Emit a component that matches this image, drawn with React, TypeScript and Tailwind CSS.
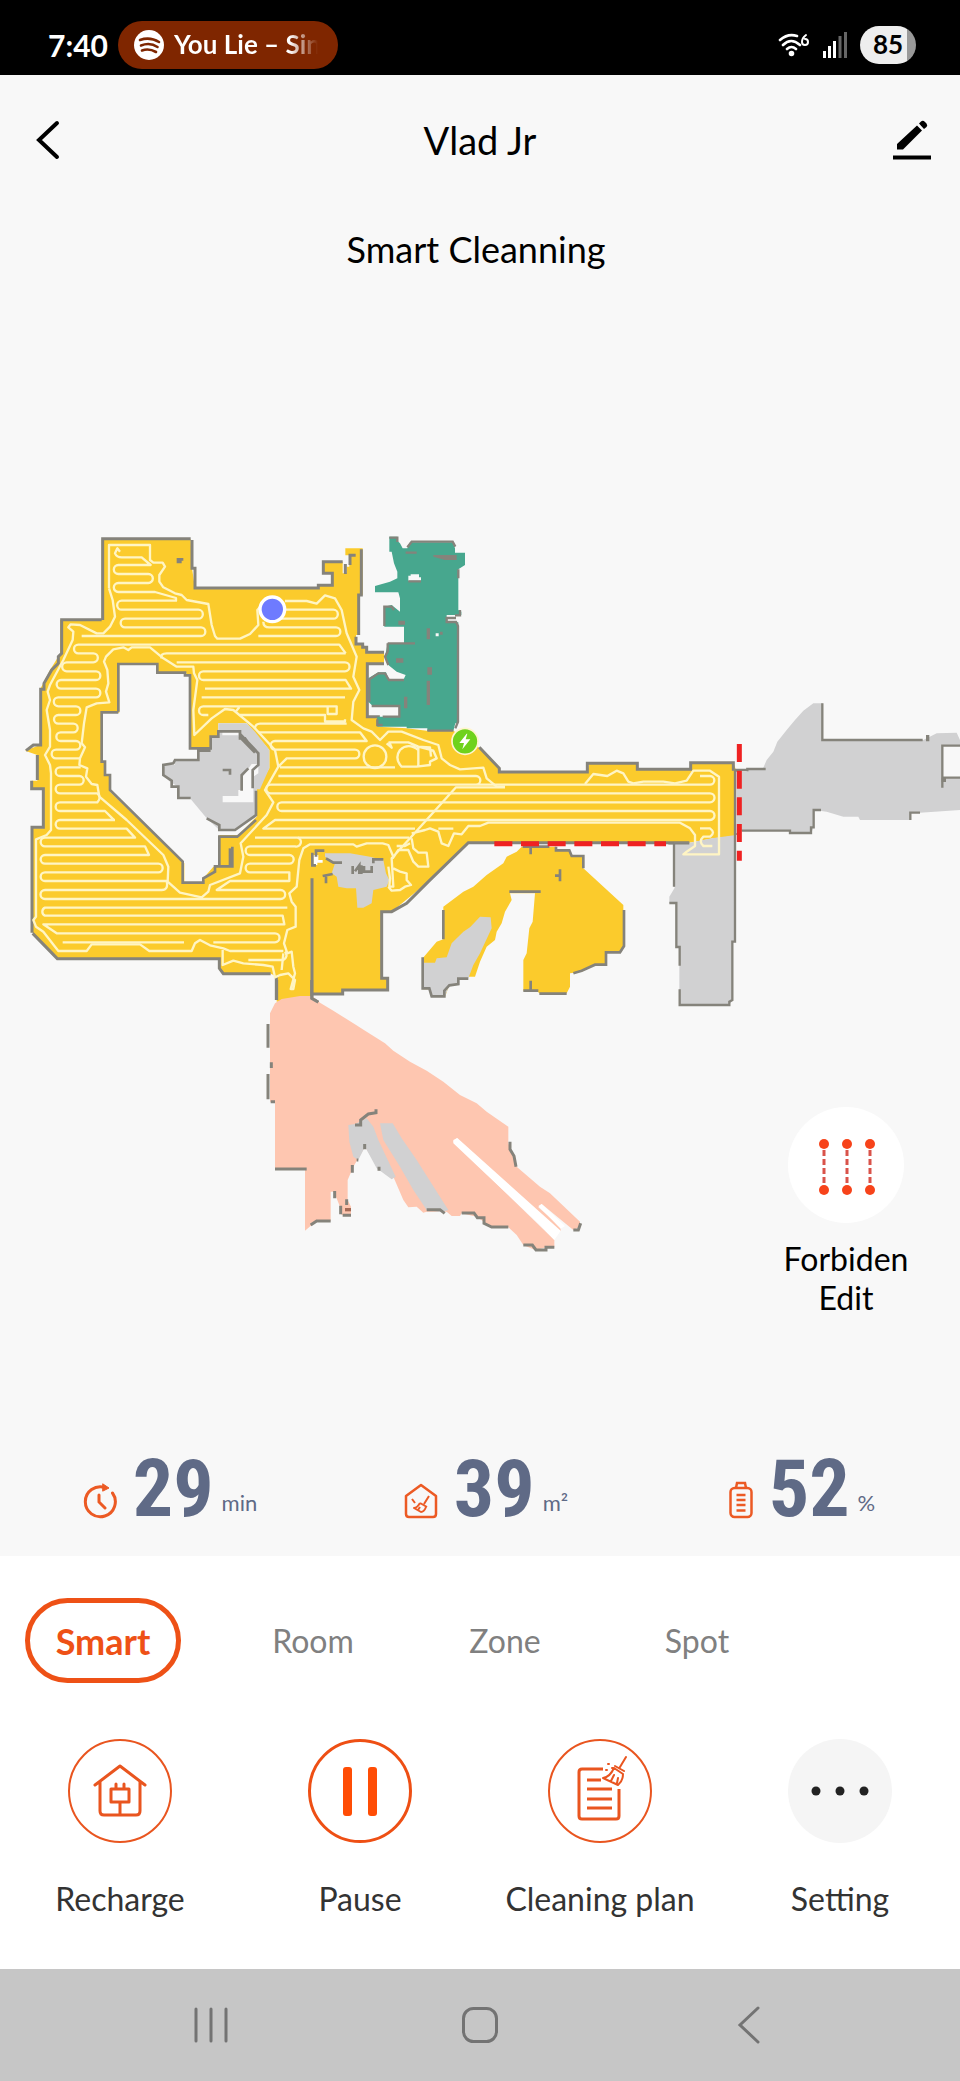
import type { ReactNode } from "react";

const WALL = "#85837b";
const FLOOR = "#fbcb2c";
const UNKNOWN = "#d1d1d2";

function CleaningMap() {
  return (
    <svg viewBox="0 0 2880 2280" className="block h-auto w-full" role="img" aria-label="Cleaning map">
      {/* main area */}
      <path
        fill={FLOOR}
        d="M305 88H572L576 175 585 235H955V228H997V190H970V155H1028V190H1040V170H1048V136H1036V115H1088V255H1078V375H1068V402H1088L1100 415V427H1152V462H1102V620H1135V650L1220 655 1280 662H1360L1440 715 1498 775V785H1762L1768 760H1912V778H2070V758H2200L2208 780V978L2140 985 2068 998H1405L1285 1115 1175 1205H1145V1405H1163V1440H1028V1450H935V1475H830V1400L810 1390H670L658 1380V1347H175L98 1268V955H130V838H95V812H112V735L75 722 120 705V538L130 520 150 480 180 432V330H305Z"
      />
      <path
        fill="#f8f8f8"
        d="M358 462H472V488H555L570 497V715H632V680H655V640H740L808 720V775L770 838V920L715 975H658V1070H640L610 1105V1120H553V1060L330 845V795H315V755H303V608H358Z"
      />
      <path
        fill={UNKNOWN}
        d="M655 640H740L765 665 808 720V775L780 838H770V920L705 960H658L620 925 570 865H535V830L510 815 488 795V765H525V750H595V725H632V680H655Z"
      />
      <path fill="#f8f8f8" d="M667 665H716V676H667ZM775 762H755L728 800V840H715V858H668V877H760V800L775 790Z" />
      <path
        fill="none"
        stroke={WALL}
        strokeWidth="9"
        d="M308 330V86H572M576 90V175H585V234H955V226H997V190H970V155H1028M1036 162V192M1050 165V136H1067M1084 118V255H1076V375M1068 380V402H1088V412H1100V427H1152M1152 461H1102V620H1135V648M305 329H185V430L175 440V460L155 480 132 520V538H122V705H100L78 722M112 735V810M95 812V836H130V952H96V1268M98 1270L172 1346H658V1375L670 1391H812M829 1400V1470M1438 712L1498 775V786H1762V760H1912V778H2072V758H2200V782M2206 975V782M2068 998H1405L1285 1115M1285 1115L1220 1180 1175 1205H1145V1405H1163V1440H1028V1452H940M936 1105V1465L955 1477"
      />
      <path
        fill="none"
        stroke={WALL}
        strokeWidth="8"
        d="M355 605V462H472V488H555V496H570V715H632V680H655V664H720V685H735L750 705 775 730V765L758 780V835M720 672L768 722M718 680L765 728M355 607H305V755H315V795H330V840L548 1055V1118H610V1105L645 1085V1069H697V1010M658 1065V980H712L768 930M725 842V795L745 775M768 842V915L705 960H658V945L620 925M572 864H535V830H515V812L490 795V765L520 760 525 750H595V722H632M668 780H690V794M530 148H550M530 156H545"
      />
      <rect x="686" y="1015" width="10" height="50" fill={WALL} />

      {/* inner obstacle */}
      <path
        fill={UNKNOWN}
        d="M975 1030H1050L1110 1040 1150 1050 1158 1090 1168 1110 1160 1130 1120 1140 1115 1180 1090 1193H1072L1068 1135H1040L1015 1130 1010 1100 995 1090 1005 1060 975 1040Z"
      />
      <path fill="#fff" d="M940 1035H955V1050H968V1058H952V1065H940Z" />
      <path
        fill="none"
        stroke={WALL}
        strokeWidth="8"
        d="M937 1028V1066H948M948 1040V1022H973M978 1045L1000 1058H1026M968 1098L998 1092M978 1100V1120M1058 1068V1092M1065 1084L1078 1066V1092M1084 1066V1092M1092 1068V1085H1115V1068M1120 1060V1048H1150"
      />

      {/* lower yellow room */}
      <g transform="translate(960 690)">
        <path
          fill={FLOOR}
          d="M605 320H708V330H745L755 348H790V385L910 495V620L900 636H858V675H825L785 695 750 700V740L740 760H658L650 752H610V660L620 640 628 565 638 545 645 460H570L575 480 555 515 545 550 530 575 525 600 500 620 480 665 465 710H415V735H388L375 770H333V748H308V655L350 605 370 598V500L430 455 460 440 500 405 550 370 560 350 590 335Z"
        />
        <path
          fill={UNKNOWN}
          d="M480 530 512 532 515 565 480 640 460 675 445 715H415V735H388L375 770H333V748H308V668H345L350 655 380 652 395 610 430 575 450 562Z"
        />
        <path
          fill="none"
          stroke={WALL}
          strokeWidth="8"
          d="M608 320H688M632 322V343M708 320V331H748L755 348H790V385M912 510V618L900 637H858V674H825L785 692 760 700M658 761H740M610 752H655M632 722V748M568 455H662M370 510V598M308 652V745H328L335 769H373V752L388 736 415 732V716H445M720 388V424M705 407H718"
        />
      </g>

      {/* corridor to the right */}
      <g transform="translate(1920 510)">
        <path
          fill={UNKNOWN}
          d="M102 488H150L215 475 288 465V785H275V965L265 975H118V860L120 800H108V668H88V650L105 622H102ZM288 275H320V268H368L380 240 400 215 412 185 440 150 465 120 490 92 520 70H548V180H850L890 160 950 158 960 180V198H907V293H960V390L840 398H810V420H660L655 410H610L560 395 522 390V440L513 460H450V452H305L288 460Z"
        />
        <path
          fill="none"
          stroke={WALL}
          strokeWidth="7"
          d="M85 490H148M102 490V620M88 669H109V801H119V857M119 928V975H268V965L277 960V785H285V465M283 270H322V267H377M547 70V180H848M960 197H907V323M910 293H960M305 452H450V459H513V442H521V390H543M811 420V398H840"
        />
        <path fill={WALL} d="M858 165H868V184H858ZM905 293H918V306H905Z" />
      </g>

      {/* green room */}
      <g transform="translate(960 0)">
        <path
          fill="#47a78e"
          d="M208 80H232V92L240 100 248 115H262L270 97H398L405 115V128H435V165L415 178V300L424 305V315H380V337H415V640H406L400 663H322V655H260V650H172V620H238V585H155L145 575V505L175 487H198L207 510H250L257 495 230 485 205 465 195 440 203 400H252V350H193V290L215 285 240 305V265L235 247H165V228L210 215 232 205V185L222 160 215 125H208Z"
        />
        <path fill="#f8f8f8" d="M265 197H272V193H297V202H303V212H265ZM347 370H356V379H347Z" />
        <path
          fill="none"
          stroke={WALL}
          strokeWidth="7"
          d="M208 83H232V96M262 112L275 95H398L406 110M415 178V205M420 300V316H405M408 324H380V336H408L414 348V635L406 655M400 662H322M172 628V645H188M188 620H238V588H155M148 575V508L175 490H195L207 510H252M193 348V290H215L222 300M203 400H285M203 400V425L195 440 205 465M265 214H303M257 128H290"
        />
        <path
          fill={WALL}
          d="M340 135H410V150H375L340 140ZM320 355H330V388H320ZM322 472H336V494H322ZM320 512H330V585H320ZM252 560H262V595H252ZM228 445H250V458H228ZM235 332H255V344H235ZM360 365H368V374H360Z"
        />
      </g>

      {/* pink room */}
      <g transform="translate(720 1410)">
        <path
          fill="#fec6b0"
          d="M90 100 105 70 125 57 180 48H215L240 68 280 92 340 130 380 155 435 190 460 212 510 245 560 272 610 305 660 345 710 370 740 395 805 440V490L830 560 900 620 930 640 1020 725V740L1000 750 905 672 895 682 962 740V753H955L650 475 640 485 943 780V802H920L885 810 850 795 830 765 805 742H755L710 710 665 700 660 708H635L620 695H560L550 698 530 680 505 682 490 660 460 590 415 565 375 500 340 560 323 600V660L333 680V705H305L300 680 282 635H272V722H230L195 752V568H105V365H90Z"
        />
        <path
          fill={UNKNOWN}
          d="M325 435 345 432 380 415 400 440 415 480 467 590 455 598 410 565 375 500 355 540 340 530 328 485ZM420 430H458L485 475 530 540 625 690 605 697 560 690 520 630 480 560 430 480Z"
        />
        <path fill="#fff" d="M640 480L652 474 962 752 943 780 900 735 640 490ZM895 678L905 672 975 738 962 746Z" />
        <path
          fill="none"
          stroke={WALL}
          strokeWidth="9"
          d="M84 132V203M84 282V358M92 365H105M94 247V264M105 567H200M110 0V60M215 0V55L235 67M345 435H362V420L385 402 408 398V388M374 492V508M350 540H355M337 555V578M417 560V572M284 633V655M302 677V703M320 658V675M308 706H333M212 735L230 723H272M560 689H600L614 700M665 699H702L712 713H732V730L755 741H805M850 795H877L888 810H918V802H943M810 485V508L822 528 828 560M1000 750H1015L1022 730"
        />
        <path fill="#a56a55" d="M315 684H333V694H315Z" />
      </g>

      {/* cleaning track */}
      <g fill="none" stroke="#fff5c4" strokeWidth="7" strokeLinejoin="round">
        <path d="M327 235V105H450V150L460 158H488L495 170 478 195V215L490 232 525 250 545 255 560 270 625 282 635 345 645 378 652 386H720L750 372 775 345 772 300 790 280" />
        <path d="M327 235L338 270 345 320 330 350 310 370H290L240 345 212 343 205 352 220 365 218 390 190 450 150 525 143 545 150 570 140 600 150 660V710L135 735 150 765 153 790V960L140 975 108 988V1220L100 1230 108 1250 130 1265 175 1323H260L275 1303H420L448 1323H575L585 1300 600 1290 630 1306 670 1315 690 1323H850" />
        <path d="M360 125L352 115 345 130Q350 142 365 142H425L452 165H355a13 13 0 0 0 0 27H445a13 13 0 0 1 0 27H355a13 13 0 0 0 0 27H465L528 264V272H365a13 13 0 0 0 0 27H595a13 13 0 0 1 0 27H375a13 13 0 0 0 0 26H603a13 13 0 0 1 0 26H245" />
        <path d="M855 273H920L950 281 975 256 1005 265 1025 300 1040 370 1070 440 1060 500 1078 540 1060 575 1055 630 1090 655 1115 665 1140 690 1165 665H1205L1270 690 1315 705 1325 745 1350 765 1380 778 1450 773 1460 805 1490 830H1515" />
        <path d="M855 299H1000a13 13 0 0 1 0 27H810M790 335Q790 352 808 352H1008a13 13 0 0 1 0 26H775" />
        <path d="M1037 430L1018 404H235a13 13 0 0 0 0 26H280a13 13 0 0 1 0 27H200a13 13 0 0 0 0 27H288a13 13 0 0 1 0 26H183a13 13 0 0 0 0 26H288a13 13 0 0 1 0 26H175a13 13 0 0 0 0 27H228a13 13 0 0 1 0 26H175a13 13 0 0 0 0 26H220a13 13 0 0 1 0 26H182a13 13 0 0 0 0 26H228a13 13 0 0 1 0 26H168a13 13 0 0 0 0 26H242M242 772H180a13 13 0 0 0 0 26H238a13 13 0 0 1 0 26H180a13 13 0 0 0 0 26H292Q306 862 292 877H180a13 13 0 0 0 0 26H315L340 928M345 930H180a13 13 0 0 0 0 26H380L405 983H135a13 13 0 0 0 0 26H435L447 1035H135a13 13 0 0 0 0 26H475a13 13 0 0 1 0 26H135a13 13 0 0 0 0 26H500Q506 1140 485 1140H135a13 13 0 0 0 0 27H842a13 13 0 0 0 0 -27H650L690 1113H868V1087H750a13 13 0 0 1 0 -26H868a13 13 0 0 0 0 -26H750a13 13 0 0 1 0 -26H885a13 13 0 0 0 8 -26" />
        <path d="M862 1193H135a13 13 0 0 0 0 24H848L853 1243H130L170 1270H825a13 13 0 0 1 0 27H640M188 1297H552M745 1350H850Q866 1340 855 1325" />
        <path d="M580 470H530L490 445 450 412H395L385 420 370 412 340 418 318 440 312 455 322 480 325 520 318 545 328 577 290 580 260 592 252 640 245 700 255 712 240 745 238 765 262 775 258 800 275 822 292 825 298 860 380 930 490 1035 505 1070 503 1115 540 1148 605 1162 625 1145 630 1125 720 1090 730 1040 722 1000 800 915 820 877 795 840 835 770 825 720 760 650 700 600 675 597 635 625 583 675 580 600 592 510 582 490Z" />
        <path d="M485 445Q480 430 500 430H1037M530 457H1035a13 13 0 0 1 0 27H610a13 13 0 0 0 0 26H1037L1053 536H615M605 562H1035M625 615H610a13 13 0 0 1 0 -26H1010V612H983V589M718 592L708 604M720 615H975V634H1035V628M1040 641H780Q765 642 765 655M775 667H1080L1100 693H825a13 13 0 0 0 0 26H1065a13 13 0 0 1 0 26H860L835 770M840 772H1185M835 798H1428a13 13 0 0 1 0 26M2100 798H2130a13 13 0 0 1 0 26H812a13 13 0 0 0 0 26H2130a13 13 0 0 1 0 27H845a13 13 0 0 0 0 26H2130a13 13 0 0 1 0 27H825L790 956H1245M765 983H1228" />
        <path d="M1515 832H1368L1230 985 1175 1045 1180 1130H1168L1170 1105 1165 1070M1755 822L1780 792 1822 798 1850 782 1870 790 1885 815 1900 820 1930 815H1990L2025 820 2060 812 2080 782H2130L2157 800V1033H2050L2060 1025 2085 1008V975L2070 955 2040 938H1465L1440 948H1405L1385 973 1362 970 1345 1008 1325 1000 1315 965 1290 955 1275 960 1235 970M1235 985L1240 1015 1255 1028H1280L1285 1070H1255L1240 1055 1225 1020H1195L1178 1045M1180 1075L1200 1085 1220 1090V1110L1233 1125 1215 1130 1200 1140 1175 1142 1165 1130M1190 1008H1215L1230 1000M1315 956H1360M2100 955H2130Q2148 968 2130 980H2110Q2095 995 2110 1008H2137" />
        <path d="M1180 1040L1165 1005 1148 1000H1100L1070 1010 1060 1003H930L910 1015 898 1050 890 1130 868 1150 875 1175 887 1190V1250L862 1260 852 1300 862 1330 875 1325 880 1370 885 1390 872 1437H880L885 1410 865 1390 840 1395 825 1402 818 1370 790 1365 730 1360 700 1352 668 1365V1320M850 1330L845 1380" />
        <circle cx="1125" cy="740" r="34" />
        <path d="M1160 700L1175 713 1168 697H1225L1255 710M1255 720Q1225 697 1200 720 1182 745 1205 770H1250L1290 765V755L1310 745 1300 722 1255 710ZM1255 710V768M1255 710L1290 712 1293 740" />
      </g>

      {/* virtual walls */}
      <g stroke="#ef2222" strokeWidth="15" strokeDasharray="54 26">
        <path d="M1483 1001H1998" />
        <path d="M2218 702V1052" />
      </g>

      {/* charging base */}
      <g transform="translate(1395 694)">
        <circle r="39" fill="#6fd21c" stroke="#fff5cf" strokeWidth="5" />
        <path fill="#fff" d="M5-23L-17 5H-3L-8 24 16-6H2L7-23Z" />
      </g>
      {/* robot */}
      <circle cx="817" cy="298" r="37" fill="#6e7bff" stroke="#fff" strokeWidth="10" />
    </svg>
  );
}

function Stat({ icon, value, unit }: { icon: ReactNode; value: string; unit: ReactNode }) {
  return (
    <div className="flex items-end justify-center text-[#5f6a86]">
      {icon}
      <span className="ml-4 font-['Liberation_Sans_Narrow','Roboto_Condensed',sans-serif] text-[80px] leading-[60px] font-bold">
        {value}
      </span>
      <span className="ml-2 text-[22px] leading-8">{unit}</span>
    </div>
  );
}

function Action({ label, children }: { label: string; children: ReactNode }) {
  return (
    <button type="button" className="flex flex-col items-center gap-9 text-[32px] leading-10 text-[#333]">
      <svg viewBox="0 0 104 104" className="size-26" fill="none" aria-hidden="true">
        {children}
      </svg>
      {label}
    </button>
  );
}

const modes = ["Room", "Zone", "Spot"];

export default function App() {
  return (
    <div className="bg-[#f8f8f8] font-[Lato,sans-serif] text-black">
      <div className="flex h-[75px] items-center justify-between bg-black pt-3.5 pr-11 pl-12 text-white">
        <div className="flex items-center gap-2.5">
          <span className="text-[30px] leading-9 font-bold">7:40</span>
          <div className="flex h-12 w-[220px] items-center gap-2.5 rounded-full bg-[#7f2600] pr-5 pl-4">
            <svg viewBox="0 0 30 30" className="size-[30px] shrink-0" aria-hidden="true">
              <circle cx="15" cy="15" r="15" fill="#fff" />
              <path d="M6 10Q16 6.500 25 12M7 15.500Q16 12 23.500 17M8 20.500Q15 18 22 22" fill="none" stroke="#7f2600" strokeWidth="2.600" strokeLinecap="round" />
            </svg>
            <span className="overflow-hidden bg-linear-to-r from-white from-80% to-transparent bg-clip-text text-[26px] font-bold whitespace-nowrap text-transparent">
              You Lie – Sin
            </span>
          </div>
        </div>
        <div className="flex items-center gap-3">
          <svg viewBox="0 0 32 26" className="h-[26px] w-8" fill="none" stroke="#fff" strokeWidth="2.600" strokeLinecap="round" aria-hidden="true">
            <path d="M2 8Q10 1 19 4M5 13Q13 5 22 13M9 17Q13.500 13 18 17" />
            <circle cx="13.500" cy="21.500" r="1.500" fill="#fff" />
            <path d="M28 3Q24 6 24 10a3 3 0 1 0 3-3" strokeWidth="2" />
          </svg>
          <svg viewBox="0 0 26 28" className="h-7 w-[26px]" fill="#fff" aria-hidden="true">
            <path d="M1 20H4V27H1ZM6 15H9V27H6ZM11 10H14V27H11Z" />
            <path d="M16.500 5H19.500V27H16.500ZM22 1H25V27H22Z" fill="#666" />
          </svg>
          <span className="flex h-[38px] w-14 items-center justify-center rounded-full bg-linear-to-r from-[#eee] from-84% to-[#999] to-84% text-[26px] font-bold text-black">
            85
          </span>
        </div>
      </div>

      <header className="flex h-[130px] items-center justify-between px-7">
        <button type="button" aria-label="Back" className="w-10">
          <svg viewBox="0 0 40 40" className="size-10" fill="none" stroke="#000" strokeWidth="4" strokeLinecap="round" aria-hidden="true">
            <path d="M29 3L11 20 29 37" />
          </svg>
        </button>
        <h1 className="text-[38px] leading-12">Vlad Jr</h1>
        <button type="button" aria-label="Edit" className="w-10">
          <svg viewBox="0 0 40 40" className="size-10" aria-hidden="true">
            <path d="M1 35.500H39V39.500H1ZM5 29.500V24L25 5.500 30 10.500 11 29.500ZM27 3.500L29 1.500Q31 0 33 2L34.500 3.500Q36 5.500 34.500 7L32 9Z" />
          </svg>
        </button>
      </header>

      <main>
        <p className="pt-5 pr-2 text-center text-4xl leading-12">Smart Cleanning</p>
        <section className="relative pt-[237px]">
          <CleaningMap />
          <button type="button" className="absolute right-[42px] bottom-[-47px] flex w-[144px] flex-col items-center gap-4 text-[32px] leading-[39px]">
            <svg viewBox="0 0 116 116" className="size-29" aria-hidden="true">
              <circle cx="58" cy="58" r="58" fill="#fff" />
              <g stroke="#d9534a" strokeWidth="3" strokeDasharray="6 3">
                <path d="M36 43V79M59 43V79M82 43V79" />
              </g>
              <g fill="#f7431a">
                <circle cx="36" cy="37" r="5" />
                <circle cx="59" cy="37" r="5" />
                <circle cx="82" cy="37" r="5" />
                <circle cx="36" cy="83" r="5" />
                <circle cx="59" cy="83" r="5" />
                <circle cx="82" cy="83" r="5" />
              </g>
            </svg>
            Forbiden Edit
          </button>
        </section>

        <section className="grid grid-cols-3 pt-[189px] pb-[37px] pl-3">
          <Stat
            value="29"
            unit="min"
            icon={
              <svg viewBox="0 0 34 36" className="h-9 w-[34px]" fill="none" stroke="#ec5a24" strokeWidth="3" strokeLinecap="round" aria-hidden="true">
                <path d="M29.500 10A15 15 0 1 1 22 4.500M16 12V19L22 25" />
                <path d="M20 1L26 5 20 8Z" fill="#ec5a24" strokeWidth="1" />
              </svg>
            }
          />
          <Stat
            value="39"
            unit={<>m²</>}
            icon={
              <svg viewBox="0 0 34 36" className="h-9 w-[34px]" fill="none" stroke="#ec5a24" strokeWidth="2.500" strokeLinejoin="round" aria-hidden="true">
                <path d="M17 2L32 13V31Q32 34 29 34H5Q2 34 2 31V13Z" />
                <path d="M25 13L20 21M16 20L23 24M16 20Q13 25 10 25L17 29Q20 29 22 24M8 16L11 20M14 27L16 24" strokeWidth="2" />
              </svg>
            }
          />
          <Stat
            value="52"
            unit="%"
            icon={
              <svg viewBox="0 0 24 38" className="h-[38px] w-6" fill="none" stroke="#ec5a24" strokeWidth="2.500" aria-hidden="true">
                <rect x="1.500" y="7" width="21" height="29" rx="4" />
                <path d="M7 7L8 2H16L17 7M7.500 14H16.500M7.500 19H16.500M7.500 24H16.500M7.500 29.500H16.500" />
              </svg>
            }
          />
        </section>
      </main>

      <section className="bg-white pt-[42px] pb-[50px]">
        <nav className="flex items-center pl-[25px] text-[32px] leading-10 text-[#808080]" aria-label="Cleaning mode">
          <button type="button" aria-pressed="true" className="mr-9 h-[85px] w-39 rounded-full border-5 border-[#ee5116] text-4xl font-bold text-[#ee5116]">
            Smart
          </button>
          {modes.map((mode) => (
            <button key={mode} type="button" className="w-48">
              {mode}
            </button>
          ))}
        </nav>
        <div className="mt-14 grid grid-cols-4">
          <Action label="Recharge">
            <g stroke="#e9551f" strokeWidth="3" strokeLinecap="round" strokeLinejoin="round">
              <circle cx="52" cy="52" r="51" strokeWidth="2" />
              <path d="M27 46L52 27 77 46M32 43V72Q32 76 36 76H68Q72 76 72 72V43M43 50H61V63H43ZM48 50V45M56 50V45M52 64V75" />
            </g>
          </Action>
          <Action label="Pause">
            <circle cx="52" cy="52" r="50.500" stroke="#ee4f14" strokeWidth="3" />
            <rect x="35" y="28" width="9" height="49" rx="3" fill="#ff4d05" />
            <rect x="60" y="28" width="9" height="49" rx="3" fill="#ff4d05" />
          </Action>
          <Action label="Cleaning plan">
            <g stroke="#e9551f" strokeWidth="3" strokeLinejoin="round">
              <circle cx="52" cy="52" r="51" strokeWidth="2" />
              <path d="M55 30H34Q31 30 31 33V77Q31 80 34 80H68Q71 80 71 77V50M39 41H53M39 50H64M39 60H64M39 69H64" />
              <path d="M78 18L72 28M67 27L76 32M66 29L75 35Q75 42 70 46L55 39Q62 38 66 29ZM63 42L66 36M69 44L70 39" strokeWidth="2" strokeLinecap="round" />
              <path d="M60 25H61M58 31H59M64 29H65" strokeWidth="2" strokeLinecap="round" />
            </g>
          </Action>
          <Action label="Setting">
            <circle cx="52" cy="52" r="52" fill="#f5f5f5" />
            <g fill="#222">
              <circle cx="28" cy="52" r="4.500" />
              <circle cx="52" cy="52" r="4.500" />
              <circle cx="76" cy="52" r="4.500" />
            </g>
          </Action>
        </div>
      </section>

      <nav className="grid h-28 grid-cols-3 items-center justify-items-center bg-[#c6c6c6] px-[76px]" aria-label="System">
        <button type="button" aria-label="Recent apps">
          <svg viewBox="0 0 38 38" className="size-[38px]" stroke="#737373" strokeWidth="3" strokeLinecap="round" aria-hidden="true">
            <path d="M4 3V35M19 3V35M34 3V35" />
          </svg>
        </button>
        <button type="button" aria-label="Home">
          <svg viewBox="0 0 38 38" className="size-[38px]" fill="none" stroke="#737373" strokeWidth="3" aria-hidden="true">
            <rect x="2.500" y="2.500" width="33" height="33" rx="10" />
          </svg>
        </button>
        <button type="button" aria-label="System back">
          <svg viewBox="0 0 38 38" className="size-[38px]" fill="none" stroke="#737373" strokeWidth="3" strokeLinecap="round" aria-hidden="true">
            <path d="M28 2L10 19 28 36" />
          </svg>
        </button>
      </nav>
    </div>
  );
}
